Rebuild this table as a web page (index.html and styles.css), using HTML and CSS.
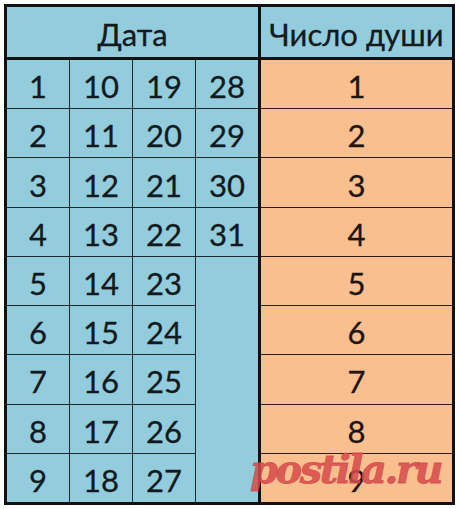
FILE: index.html
```html
<!DOCTYPE html>
<html lang="ru">
<head>
<meta charset="utf-8">
<title>Число души</title>
<link rel="stylesheet" href="styles.css">
</head>
<body>
<div class="sheet">
  <div class="table">
    <div class="head head-date">Дата</div>
    <div class="head head-soul">Число души</div>
    <div class="dates">
      <div class="cell">1</div><div class="cell">10</div><div class="cell">19</div><div class="cell">28</div>
      <div class="cell">2</div><div class="cell">11</div><div class="cell">20</div><div class="cell">29</div>
      <div class="cell">3</div><div class="cell">12</div><div class="cell">21</div><div class="cell">30</div>
      <div class="cell">4</div><div class="cell">13</div><div class="cell">22</div><div class="cell">31</div>
      <div class="cell">5</div><div class="cell">14</div><div class="cell">23</div><div class="cell merged"></div>
      <div class="cell">6</div><div class="cell">15</div><div class="cell">24</div>
      <div class="cell">7</div><div class="cell">16</div><div class="cell">25</div>
      <div class="cell">8</div><div class="cell">17</div><div class="cell">26</div>
      <div class="cell">9</div><div class="cell">18</div><div class="cell">27</div>
    </div>
    <div class="souls">
      <div class="cell soul">1</div>
      <div class="cell soul">2</div>
      <div class="cell soul">3</div>
      <div class="cell soul">4</div>
      <div class="cell soul">5</div>
      <div class="cell soul">6</div>
      <div class="cell soul">7</div>
      <div class="cell soul">8</div>
      <div class="cell soul">9</div>
    </div>
  </div>
  <div class="watermark">postila.ru</div>
</div>
</body>
</html>
```

FILE: styles.css
```css
html, body {
  margin: 0;
  padding: 0;
  background: #ffffff;
}

body {
  width: 460px;
  height: 509px;
  overflow: hidden;
  font-family: Lato, "Open Sans", sans-serif;
  color: #121a20;
}

.sheet {
  position: relative;
  padding: 4px 0 0 4px;
  width: 460px;
  height: 509px;
  box-sizing: border-box;
  background: #ffffff;
}

.table {
  display: grid;
  grid-template-columns: 251px 191px;
  grid-template-rows: 50px 442px;
  gap: 3px;
  width: 451px;
  border: 3px solid #111111;
  box-sizing: border-box;
  background: #111111;
}

.head {
  background: #93cddd;
  display: flex;
  align-items: center;
  justify-content: center;
  font-size: 31px;
  padding-top: 3px;
  box-sizing: border-box;
  color: #141a1e;
  -webkit-text-stroke: 0.3px currentColor;
}

.dates {
  display: grid;
  grid-template-columns: repeat(4, 1fr);
  grid-template-rows: repeat(9, 1fr);
  gap: 1px;
  background: #1d2a30;
}

.cell {
  display: flex;
  align-items: center;
  justify-content: center;
  background: #93cddd;
  font-size: 31px;
  padding-top: 4px;
  box-sizing: border-box;
  -webkit-text-stroke: 0.3px currentColor;
}

.merged {
  grid-column: 4;
  grid-row: 5 / span 5;
}

.souls {
  display: grid;
  grid-template-rows: repeat(9, 1fr);
  gap: 1px;
  background: #2a1c14;
}

.soul {
  background: #f9bf8f;
  color: #1e1410;
}

.watermark {
  position: absolute;
  left: 250px;
  top: 449px;
  font-family: "DejaVu Serif", "Liberation Serif", serif;
  font-weight: bold;
  font-style: italic;
  font-size: 40px;
  letter-spacing: -2.5px;
  color: rgba(214, 74, 74, 0.86);
  -webkit-text-stroke: 0.8px rgba(214, 74, 74, 0.86);
  line-height: 1;
}
```
